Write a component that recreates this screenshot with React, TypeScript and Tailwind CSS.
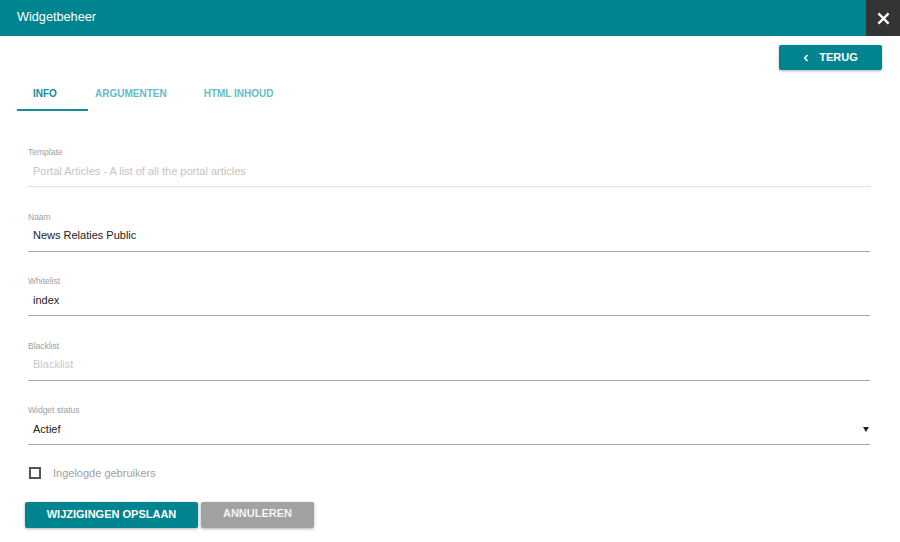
import React from "react";

const fieldLabel = "block h-[13px] text-[8.5px] leading-[13px] text-[#9e9e9e]";

function Field({
  label,
  value,
  placeholder,
  disabled,
  select,
}: {
  label: string;
  value?: string;
  placeholder?: string;
  disabled?: boolean;
  select?: boolean;
}) {
  return (
    <div>
      <span className={fieldLabel}>{label}</span>
      <div
        className={`relative flex h-[28px] items-center pb-[3px] pl-[5px] text-[11px] ${
          disabled
            ? "border-b border-dotted border-[#cfcfcf] text-[#c4c4c4]"
            : "border-b border-[#a8a8a8] text-[#222]"
        }`}
      >
        {value ? value : <span className="text-[#c8c8c8]">{placeholder}</span>}
        {select && (
          <span className="absolute right-[1px] top-[10px] h-0 w-0 border-x-[3px] border-t-[5px] border-x-transparent border-t-[#222]" />
        )}
      </div>
    </div>
  );
}

export default function App() {
  return (
    <div
      className="h-[542px] w-[900px] overflow-hidden bg-white"
      style={{ fontFamily: '"Liberation Sans", Arial, sans-serif' }}
    >
      {/* Header */}
      <div className="flex h-[36px] items-stretch bg-[#00848f]">
        <div className="flex flex-1 items-center pl-[17px] text-[12.7px] text-white">Widgetbeheer</div>
        <button className="flex w-[34px] items-center justify-center bg-[#343437]">
          <svg width="13" height="13" viewBox="0 0 14 14">
            <path d="M1.5 1.5 L12.5 12.5 M12.5 1.5 L1.5 12.5" stroke="white" strokeWidth="2.4" />
          </svg>
        </button>
      </div>

      {/* Back button */}
      <div className="flex justify-end pr-[18px] pt-[9px]">
        <button className="flex h-[25px] w-[103px] items-center justify-center gap-[10px] rounded-[2px] bg-[#00848f] text-[11px] font-bold text-white shadow-[0_1px_3px_rgba(0,0,0,0.3)]">
          <svg width="6" height="8" viewBox="0 0 6 8">
            <path d="M4.5 1 L1.8 4 L4.5 7" stroke="white" strokeWidth="1.6" fill="none" />
          </svg>
          <span>TERUG</span>
        </button>
      </div>

      {/* Tabs */}
      <div className="mt-[10px] flex pl-[17px] text-[10px] font-bold">
        <div className="h-[31px] w-[71px] border-b-2 border-[#1a8c96] pl-[16px] pt-[6px] text-[#1a8c96]">INFO</div>
        <div className="ml-[7px] pt-[6px] text-[#66bcc4]">ARGUMENTEN</div>
        <div className="ml-[37px] pt-[6px] text-[#66bcc4]">HTML INHOUD</div>
      </div>

      {/* Form */}
      <div className="mt-[35px] flex flex-col gap-[23.5px] pl-[28px] pr-[30px]">
        <Field label="Template" value="Portal Articles - A list of all the portal articles" disabled />
        <Field label="Naam" value="News Relaties Public" />
        <Field label="Whitelist" value="index" />
        <Field label="Blacklist" placeholder="Blacklist" />
        <Field label="Widget status" value="Actief" select />
      </div>

      <div className="mt-[20px] flex items-center pl-[29px]">
        <span className="h-[12px] w-[12px] border-2 border-[#555]" />
        <span className="ml-[12px] text-[11px] text-[#9e9e9e]">Ingelogde gebruikers</span>
      </div>

      <div className="mt-[20px] flex gap-[3px] pl-[25px]">
        <button className="h-[26px] w-[173px] rounded-[2px] bg-[#00848f] text-[11px] font-bold text-white shadow-[0_1px_3px_rgba(0,0,0,0.3)]">
          WIJZIGINGEN OPSLAAN
        </button>
        <button className="h-[26px] w-[113px] rounded-[2px] bg-[#a2a2a2] pb-[3px] text-[11px] font-bold text-[#f4f4f4] shadow-[0_1px_3px_rgba(0,0,0,0.3)]">
          ANNULEREN
        </button>
      </div>
    </div>
  );
}
